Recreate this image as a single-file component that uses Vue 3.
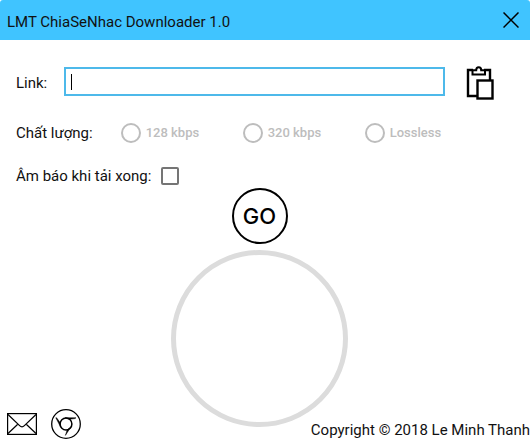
<script setup>
import { ref } from 'vue'

const link = ref('')
const quality = ref('')
const notify = ref(false)
const qualities = ['128 kbps', '320 kbps', 'Lossless']
</script>

<template>
  <main class="window">
    <header class="titlebar">
      <h1 class="title">LMT ChiaSeNhac Downloader 1.0</h1>
      <button class="icon-button close" type="button" aria-label="Close">
        <svg width="16" height="16" viewBox="0 0 16 16">
          <path d="M0.5 0.5L15.5 15.5M15.5 0.5L0.5 15.5" fill="none" stroke="#000" stroke-width="1.5" />
        </svg>
      </button>
    </header>

    <form class="form" @submit.prevent>
      <div class="row link-row">
        <label class="label" for="link">Link:</label>
        <div class="field">
          <input id="link" v-model="link" class="link-input" type="text" autocomplete="off" />
          <span v-if="!link" class="caret"></span>
        </div>
        <button class="icon-button paste" type="button" aria-label="Paste">
          <svg width="28" height="34" viewBox="0 0 28 34">
            <g fill="none" stroke="#000">
              <path d="M11 30H2V4H7M18 4H24V14" stroke-width="2.4" />
              <path d="M6.5 4.2H10.2Q10.2 1.2 12.7 1.2Q15.2 1.2 15.2 4.2H19V8.5H6.5Z" stroke-width="2" />
              <rect x="11.5" y="14.5" width="15" height="18" stroke-width="2.4" fill="#fff" />
            </g>
          </svg>
        </button>
      </div>

      <div class="row quality-row" role="radiogroup" aria-labelledby="quality-label">
        <span id="quality-label" class="label">Chất lượng:</span>
        <div class="options">
          <label v-for="q in qualities" :key="q" class="option">
            <input v-model="quality" class="radio" type="radio" name="quality" :value="q" disabled />
            {{ q }}
          </label>
        </div>
      </div>

      <div class="row notify-row">
        <label class="label" for="notify">Âm báo khi tải xong:</label>
        <input id="notify" v-model="notify" class="checkbox" type="checkbox" />
      </div>

      <button class="go" type="submit">GO</button>
    </form>

    <section class="bottom">
      <div class="progress" role="progressbar" aria-label="Download progress"></div>
      <footer class="footer">
        <a class="contact" href="#mail" aria-label="Email">
          <svg width="30" height="22" viewBox="0 0 30 22">
            <g fill="none" stroke="#000" stroke-width="1.2">
              <rect x="0.6" y="0.6" width="28.8" height="20.8" />
              <path d="M1 1.5L12.6 12.6Q15 15 17.4 12.6L29 1.5M1 20.5L10.5 11.5M29 20.5L19.5 11.5" />
            </g>
          </svg>
        </a>
        <a class="contact" href="#web" aria-label="Website">
          <svg width="30" height="30" viewBox="0 0 30 30">
            <g fill="none" stroke="#000" stroke-width="1.3">
              <circle cx="15" cy="15" r="14.3" />
              <circle cx="15" cy="15" r="5.9" stroke-width="1.5" />
            </g>
            <path d="M14 8.8H25L24 9.6L18.5 10.2ZM4.8 8.8L9.6 18L9.1 13.6L5.6 8.8ZM14.4 26.4L20 17.8L16.2 20.8Z" stroke="#000" stroke-width="0.5" />
          </svg>
        </a>
        <span class="copyright">Copyright © 2018 Le Minh Thanh</span>
      </footer>
    </section>
  </main>
</template>

<style>
body {
  margin: 0;
  background: #fff;
}
</style>

<style scoped>
.window {
  display: flex;
  flex-direction: column;
  min-height: 100vh;
  box-sizing: border-box;
  background: #fff;
  color: #111;
  font-family: Roboto, "Noto Sans", sans-serif;
  font-size: 15px;
  line-height: 20px;
}

.titlebar {
  display: flex;
  align-items: center;
  justify-content: space-between;
  height: 40px;
  padding: 0 11px 0 7px;
  border-radius: 3px 3px 0 0;
  background: #40c4ff;
}

.title {
  margin: 0;
  padding-top: 4px;
  font-size: 15px;
  font-weight: 400;
}

.icon-button {
  display: flex;
  padding: 0;
  border: 0;
  background: none;
}

.form {
  display: flex;
  flex-direction: column;
  padding: 26px 0 0 16px;
}

.row {
  display: flex;
  align-items: center;
}

.link-row {
  gap: 17px;
  padding-right: 36px;
}

.field {
  position: relative;
  display: flex;
  flex: 1;
  align-self: flex-start;
  margin: 1px 4px 0 0;
}

.link-input {
  flex: 1;
  min-width: 0;
  height: 29px;
  box-sizing: border-box;
  padding: 0 6px;
  border: 2px solid #4db9ea;
  border-radius: 0;
  outline: none;
  background: #fff;
  font: inherit;
  caret-color: transparent;
}

.caret {
  position: absolute;
  top: 7px;
  left: 7px;
  width: 1px;
  height: 16px;
  background: #000;
}

.quality-row {
  gap: 28px;
  margin-top: 23px;
}

.options {
  display: grid;
  flex: 1;
  grid-template-columns: repeat(3, minmax(0, 122px));
}

.option {
  display: flex;
  align-items: center;
  gap: 5px;
  color: #bdbdbd;
  font-size: 13px;
  font-weight: 500;
}

.radio,
.checkbox {
  appearance: none;
  box-sizing: border-box;
  margin: 0;
  background: #fff;
}

.radio {
  width: 20px;
  height: 20px;
  border: 2px solid #bdbdbd;
  border-radius: 50%;
}

.notify-row {
  gap: 10px;
  margin-top: 23px;
}

.checkbox {
  width: 18px;
  height: 18px;
  border: 2px solid #757575;
  border-radius: 2px;
}

.go {
  align-self: center;
  width: 56px;
  height: 56px;
  margin: 2px 27px 0 0;
  padding: 0;
  border: 2px solid #000;
  border-radius: 50%;
  background: #fff;
  color: #000;
  font-family: Inter, "Liberation Sans", sans-serif;
  font-size: 22px;
  font-weight: 500;
}

.bottom {
  display: grid;
  flex: 1;
  padding-top: 6px;
}

.progress {
  grid-area: 1 / 1;
  justify-self: center;
  box-sizing: border-box;
  width: 177px;
  height: 177px;
  margin: 0 11px 12px 0;
  border: 5px solid #dcdcdc;
  border-radius: 50%;
}

.footer {
  grid-area: 1 / 1;
  align-self: end;
  display: flex;
  align-items: center;
  gap: 14px;
  padding-left: 7px;
}

.contact {
  display: flex;
}

.copyright {
  align-self: flex-end;
  margin-left: auto;
  line-height: 18px;
}
</style>
